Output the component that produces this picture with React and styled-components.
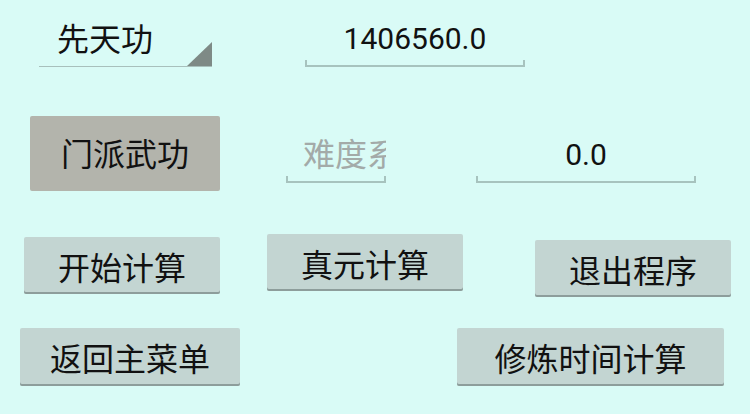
import React from 'react';
import styled, { createGlobalStyle } from 'styled-components';

const GlobalStyle = createGlobalStyle`
  html, body {
    margin: 0;
    padding: 0;
    background: #d9fbf6;
  }
  body {
    font-family: Roboto, "Noto Sans CJK SC", sans-serif;
    color: #111;
  }
`;

const Screen = styled.div`
  width: 750px;
  height: 414px;
  overflow: hidden;
  background: #d9fbf6;
  display: flex;
  flex-direction: column;
`;

const Row = styled.div`
  display: flex;
  align-items: flex-start;
  height: ${p => p.$height}px;
`;

const Spinner = styled.div`
  position: relative;
  box-sizing: border-box;
  margin-left: 39px;
  width: 173px;
  height: 67px;
  padding: 24px 0 0 18px;
  border-bottom: 1px solid #a8c0bc;
  font-family: Roboto, "Noto Sans CJK SC", sans-serif;
  font-size: 32px;
  line-height: 1;
`;

const Corner = styled.svg`
  position: absolute;
  right: 0;
  bottom: 0;
`;

const Field = styled.div`
  box-sizing: border-box;
  display: flex;
  flex-direction: column;
  margin-left: ${p => p.$left}px;
  margin-top: ${p => p.$top || 0}px;
  width: ${p => p.$width}px;
`;

const Value = styled.div`
  box-sizing: border-box;
  height: ${p => p.$height}px;
  padding: 0 ${p => (p.$hint ? 14 : 0)}px 0 ${p => (p.$hint ? 17 : 0)}px;
  overflow: hidden;
  white-space: nowrap;
  text-align: ${p => (p.$hint ? 'left' : 'center')};
  font-family: ${p => (p.$hint ? '"Noto Sans CJK SC"' : 'Roboto')}, sans-serif;
  font-size: ${p => (p.$hint ? 32 : 30)}px;
  line-height: ${p => (p.$hint ? p.$height - 8 : p.$height - 2)}px;
  color: ${p => (p.$hint ? '#a3aaa8' : '#111')};
`;

const Clip = styled.div`
  overflow: hidden;
`;

const Underline = styled.div`
  height: 5px;
  border: 2px solid #a7c3be;
  border-top: none;
`;

const Button = styled.button`
  box-sizing: border-box;
  display: flex;
  align-items: center;
  justify-content: center;
  margin-left: ${p => p.$left}px;
  margin-top: ${p => p.$top || 0}px;
  width: ${p => p.$width}px;
  height: ${p => p.$height || 57}px;
  padding: 0 0 ${p => (p.$pressed ? 4 : 0)}px;
  border: none;
  border-radius: 2px;
  background: ${p => (p.$pressed ? '#b3b4ac' : '#c3d5d2')};
  box-shadow: ${p => (p.$pressed ? 'none' : 'inset 0 -2px 0 #8d9d9b')};
  font-family: "Noto Sans CJK SC", sans-serif;
  font-size: 32px;
  line-height: 1;
  color: #111;
`;

export default function App() {
  return (
    <Screen>
      <GlobalStyle />
      <Row $height={116}>
        <Spinner>
          先天功
          <Corner width="25" height="24" viewBox="0 0 25 24">
            <polygon points="25,0 25,24 0,24" fill="#7e8a86" />
          </Corner>
        </Spinner>
        <Field $left={93} $top={20}>
          <Value $height={40} style={{ width: 220 }}>1406560.0</Value>
          <Underline />
        </Field>
      </Row>
      <Row $height={121}>
        <Button $pressed $left={30} $width={190} $height={75}>门派武功</Button>
        <Field $left={66} $width={100} $top={20}>
          <Clip>
            <Value $hint $height={40}>难度系数</Value>
          </Clip>
          <Underline />
        </Field>
        <Field $left={90} $width={220} $top={20}>
          <Value $height={40}>0.0</Value>
          <Underline />
        </Field>
      </Row>
      <Row $height={91}>
        <Button $left={24} $width={196}>开始计算</Button>
        <Button $left={47} $top={-3} $width={196}>真元计算</Button>
        <Button $left={72} $top={3} $width={196}>退出程序</Button>
      </Row>
      <Row $height={86}>
        <Button $left={20} $width={220} $height={58}>返回主菜单</Button>
        <Button $left={217} $width={267} $height={58}>修炼时间计算</Button>
      </Row>
    </Screen>
  );
}
